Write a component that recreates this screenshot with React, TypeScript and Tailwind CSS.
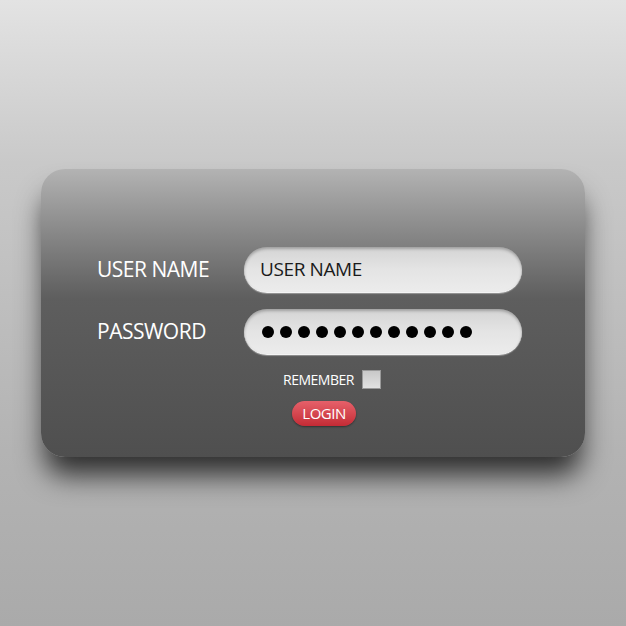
import * as React from 'react';

const font = { fontFamily: '"Open Sans", "Noto Sans", sans-serif' };

const Field: React.FC<{ label: string; children: React.ReactNode }> = ({ label, children }) => (
    <div className="flex items-center">
        <span className="w-[147px] text-[21px] text-white tracking-[-0.5px]">{label}</span>
        <div className="w-[278px] h-[46px] rounded-full flex items-center px-[16px] bg-gradient-to-b from-[#d4d4d4] via-[#e4e4e4] to-[#ececec] shadow-[inset_0_2px_3px_rgba(0,0,0,0.25),0_1px_1px_rgba(255,255,255,0.35)] border-b border-[#f4f4f4]">
            {children}
        </div>
    </div>
);

export default function App() {
    return (
        <div style={font} className="w-[626px] h-[626px] bg-[linear-gradient(to_bottom,#e3e3e3_0%,#c9c9c9_26%,#b3b3b3_72%,#aaaaaa_100%)] pt-[169px] pl-[41px] overflow-hidden">
            <div className="w-[544px] h-[288px] rounded-[24px] bg-gradient-to-b from-[#b3b3b3] via-[#5e5e5e] via-45% to-[#4f4f4f] shadow-[0_22px_28px_-4px_rgba(0,0,0,0.75)] pt-[78px] pl-[56px]">
                <div className="flex flex-col gap-[16px]">
                    <Field label="USER NAME">
                        <span className="text-[19px] text-[#1a1a1a] tracking-[-0.4px]">USER NAME</span>
                    </Field>
                    <Field label="PASSWORD">
                        <div className="flex gap-[6px] pl-[2px]">
                            {Array.from({ length: 12 }).map((_, i) => (
                                <span key={i} className="w-[12px] h-[12px] rounded-full bg-black" />
                            ))}
                        </div>
                    </Field>
                </div>
                <div className="flex items-center gap-[8px] mt-[14px] pl-[186px]">
                    <span className="text-[14px] text-white tracking-[-0.5px]">REMEMBER</span>
                    <span className="w-[19px] h-[19px] bg-gradient-to-b from-[#c8c8c8] to-[#e2e2e2] border border-[#9a9a9a]" />
                </div>
                <div className="pl-[195px] mt-[11px]">
                    <button className="w-[64px] h-[25px] rounded-full bg-gradient-to-b from-[#e6606a] to-[#c42a35] text-white text-[15px] tracking-[-0.5px] shadow-[0_1px_2px_rgba(0,0,0,0.4)]">
                        LOGIN
                    </button>
                </div>
            </div>
        </div>
    );
}
